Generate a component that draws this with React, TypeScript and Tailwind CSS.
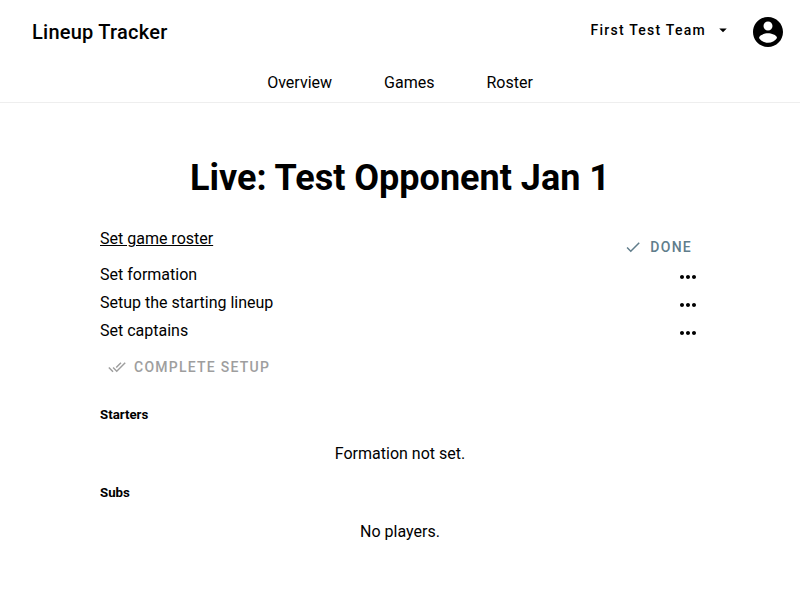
const rows = ["Set formation", "Setup the starting lineup", "Set captains"];

export default function App() {
  return (
    <div className="h-[600px] overflow-hidden bg-white font-[Roboto,sans-serif] text-base leading-7 text-black">
      <header className="h-[103px] border-b border-[#eeeeee]">
        <div className="flex h-16 items-center pr-[14px] pl-8">
          <div className="flex-1 text-xl font-medium tracking-[0.25px]">Lineup Tracker</div>
          <button className="mr-[18px] flex h-9 items-center pb-1 text-sm font-medium tracking-[1.25px]">
            First Test Team
            <svg className="ml-2 size-[18px]" viewBox="0 0 24 24"><path d="M7 10l5 5 5-5z" /></svg>
          </button>
          <svg className="size-9" viewBox="0 0 24 24"><path d="M12 2C6.48 2 2 6.48 2 12s4.48 10 10 10 10-4.48 10-10S17.52 2 12 2zm0 3c1.66 0 3 1.34 3 3s-1.34 3-3 3-3-1.34-3-3 1.34-3 3-3zm0 14.2c-2.5 0-4.71-1.28-6-3.22.03-1.99 4-3.08 6-3.08 1.99 0 5.97 1.09 6 3.08-1.29 1.94-3.5 3.22-6 3.22z" /></svg>
        </div>
        <nav className="flex justify-center gap-[52px] pt-[5px]">
          <a>Overview</a><a>Games</a><a>Roster</a>
        </nav>
      </header>
      <main className="mx-auto w-[600px] pt-[50px]">
        <h2 className="text-center text-4xl leading-[50px] font-bold">Live: Test Opponent Jan 1</h2>
        <div className="mt-[22px] flex h-9 justify-between">
          <a className="underline">Set game roster</a>
          <button className="mt-1 mr-2 flex h-9 items-center text-sm font-medium tracking-[1.25px] text-[#607d8b]">
            <svg className="mr-2 size-[18px]" viewBox="0 0 24 24" fill="currentColor"><path d="M9 16.17L4.83 12l-1.42 1.41L9 19 21 7l-1.41-1.41z" /></svg>
            DONE
          </button>
        </div>
        {rows.map((row) => (
          <div key={row} className="flex h-7 justify-between">
            <span>{row}</span>
            <svg className="mt-1 size-6" viewBox="0 0 24 24"><path d="M6 10c-1.1 0-2 .9-2 2s.9 2 2 2 2-.9 2-2-.9-2-2-2zm12 0c-1.1 0-2 .9-2 2s.9 2 2 2 2-.9 2-2-.9-2-2-2zm-6 0c-1.1 0-2 .9-2 2s.9 2 2 2 2-.9 2-2-.9-2-2-2z" /></svg>
          </div>
        ))}
        <button className="mt-1 ml-2 flex h-9 items-center text-sm font-medium tracking-[1.25px] text-[#9e9e9e]">
          <svg className="mr-2 size-[18px]" viewBox="0 0 24 24" fill="currentColor"><path d="M18 7l-1.41-1.41-6.34 6.34 1.41 1.41L18 7zm4.24-1.41L11.66 16.17 7.48 12l-1.41 1.41L11.66 19l12-12-1.42-1.41zM.41 13.41L6 19l1.41-1.41L1.83 12 .41 13.41z" /></svg>
          COMPLETE SETUP
        </button>
        <h5 className="mt-[18px] text-[13.28px] leading-[23px] font-bold">Starters</h5>
        <p className="mt-[14px] text-center">Formation not set.</p>
        <h5 className="mt-[13px] text-[13.28px] leading-[23px] font-bold">Subs</h5>
        <p className="mt-[14px] text-center">No players.</p>
      </main>
    </div>
  );
}
